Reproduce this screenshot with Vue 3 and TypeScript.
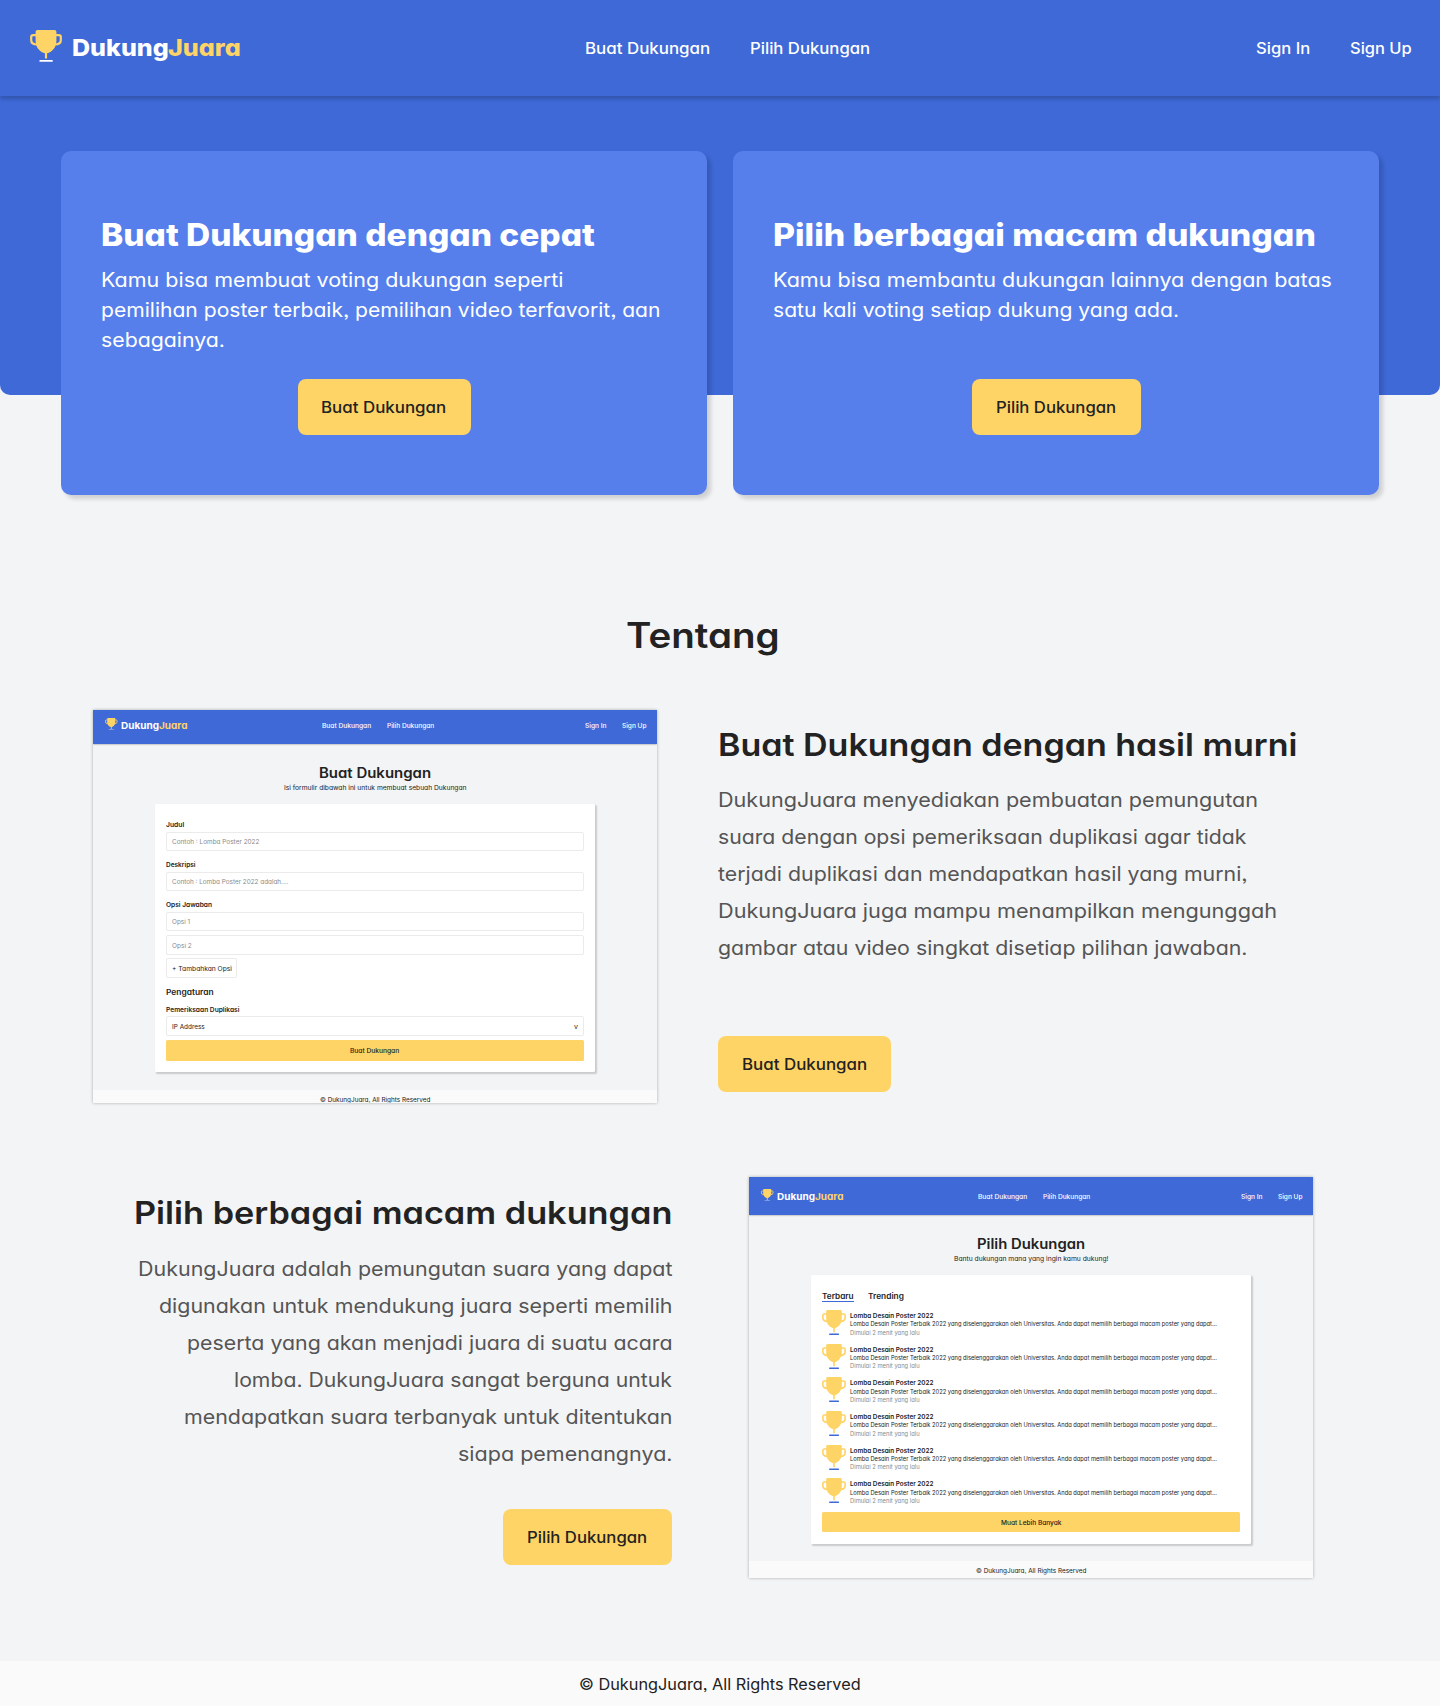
<script setup lang="ts">
import { defineComponent, h, type Directive } from 'vue'

// Stretches a single line horizontally so that its glyphs span the given width.
const fitText = (el: HTMLElement, width: number) => {
  const natural = el.getBoundingClientRect().width
  const bearings = parseFloat(getComputedStyle(el).fontSize) * 0.07
  const k = width / (natural - bearings)
  el.style.transform = `scaleX(${k})`
  el.style.marginRight = `${natural * k - natural}px`
}
const vFit: Directive<HTMLElement, number> = {
  mounted: (el, binding) => fitText(el, binding.value),
}

const Trophy = defineComponent({
  props: { base: { type: String, default: '#ffffff' } },
  setup: (props) => () =>
    h('svg', { viewBox: '0 0 32 32', fill: 'none', preserveAspectRatio: 'none' }, [
      h('path', {
        d: 'M7 5.1H3.2Q1.2 5.1 1.2 7.1V10.2Q1.2 14.3 7.2 14.5M25 5.1H28.8Q30.8 5.1 30.8 7.1V10.2Q30.8 14.3 24.8 14.5',
        stroke: '#ffd466',
        'stroke-width': 2.2,
      }),
      h('path', {
        d: 'M7.4 0H24.6Q26.4 0 26.4 1.8V11C26.4 18 21.5 22.2 17.1 23.3V28.4H14.9V23.3C10.5 22.2 5.6 18 5.6 11V1.8Q5.6 0 7.4 0Z',
        fill: '#ffd466',
      }),
      h('path', { d: 'M10.3 30.9H21.9', stroke: props.base, 'stroke-width': 1.9, 'stroke-linecap': 'round' }),
    ]),
})

type Line = { text: string; w: number }

const cards: { title: Line; lines: Line[]; button: Line; bw: number }[] = [
  {
    title: { text: 'Buat Dukungan dengan cepat', w: 491.5 },
    lines: [
      { text: 'Kamu bisa membuat voting dukungan seperti', w: 461 },
      { text: 'pemilihan poster terbaik, pemilihan video terfavorit, aan', w: 558 },
      { text: 'sebagainya.', w: 122.5 },
    ],
    button: { text: 'Buat Dukungan', w: 124 },
    bw: 173,
  },
  {
    title: { text: 'Pilih berbagai macam dukungan', w: 540.5 },
    lines: [
      { text: 'Kamu bisa membantu dukungan lainnya dengan batas', w: 557.5 },
      { text: 'satu kali voting setiap dukung yang ada.', w: 404.5 },
    ],
    button: { text: 'Pilih Dukungan', w: 119 },
    bw: 169,
  },
]

const buatLines: Line[] = [
  { text: 'DukungJuara menyediakan pembuatan pemungutan', w: 538.5 },
  { text: 'suara dengan opsi pemeriksaan duplikasi agar tidak', w: 527 },
  { text: 'terjadi duplikasi dan mendapatkan hasil yang murni,', w: 528 },
  { text: 'DukungJuara juga mampu menampilkan mengunggah', w: 557.5 },
  { text: 'gambar atau video singkat disetiap pilihan jawaban.', w: 528 },
]
const pilihLines: Line[] = [
  { text: 'DukungJuara adalah pemungutan suara yang dapat', w: 533 },
  { text: 'digunakan untuk mendukung juara seperti memilih', w: 512 },
  { text: 'peserta yang akan menjadi juara di suatu acara', w: 484 },
  { text: 'lomba. DukungJuara sangat berguna untuk', w: 436.5 },
  { text: 'mendapatkan suara terbanyak untuk ditentukan', w: 487 },
  { text: 'siapa pemenangnya.', w: 213 },
]
</script>

<template>
  <div class="page">
    <header class="header">
      <div class="logo">
        <Trophy class="trophy" />
        <div class="brand"><span v-fit="95" class="fit">Dukung</span><span v-fit="71" class="fit gold">Juara</span></div>
      </div>
      <nav class="nav">
        <a><span v-fit="124" class="fit">Buat Dukungan</span></a>
        <a><span v-fit="119" class="fit">Pilih Dukungan</span></a>
      </nav>
      <nav class="nav">
        <a><span v-fit="53" class="fit">Sign In</span></a>
        <a><span v-fit="60.5" class="fit">Sign Up</span></a>
      </nav>
    </header>

    <section class="hero">
      <article v-for="c in cards" :key="c.title.text" class="card">
        <h2><span v-fit="c.title.w" class="fit">{{ c.title.text }}</span></h2>
        <div class="copy">
          <p v-for="l in c.lines" :key="l.text"><span v-fit="l.w" class="fit">{{ l.text }}</span></p>
        </div>
        <button class="btn" :style="{ width: c.bw + 'px' }"><span v-fit="c.button.w" class="fit">{{ c.button.text }}</span></button>
      </article>
    </section>

    <main class="about">
      <h1><span v-fit="151" class="fit">Tentang</span></h1>

      <div class="row first">
        <div class="mock">
          <div class="m-header short">
            <div class="logo">
              <Trophy class="trophy" />
              <div class="brand"><span v-fit="37.3" class="fit">Dukung</span><span v-fit="27.8" class="fit gold">Juara</span></div>
            </div>
            <div class="nav">
              <a><span v-fit="48.7" class="fit">Buat Dukungan</span></a>
              <a><span v-fit="46.8" class="fit">Pilih Dukungan</span></a>
            </div>
            <div class="nav">
              <a><span v-fit="21" class="fit">Sign In</span></a>
              <a><span v-fit="24" class="fit">Sign Up</span></a>
            </div>
          </div>
          <h3><span v-fit="111" class="fit">Buat Dukungan</span></h3>
          <div class="m-sub"><span v-fit="182" class="fit">Isi formulir dibawah ini untuk membuat sebuah Dukungan</span></div>
          <div class="m-card form">
            <div class="label top"><span v-fit="17.7" class="fit">Judul</span></div>
            <div class="input"><span v-fit="87" class="fit">Contoh : Lomba Poster 2022</span></div>
            <div class="label"><span v-fit="29" class="fit">Deskripsi</span></div>
            <div class="input"><span v-fit="116" class="fit">Contoh : Lomba Poster 2022 adalah....</span></div>
            <div class="label"><span v-fit="45.5" class="fit">Opsi Jawaban</span></div>
            <div class="input"><span v-fit="17.7" class="fit">Opsi 1</span></div>
            <div class="input next"><span v-fit="19.3" class="fit">Opsi 2</span></div>
            <div class="input next add"><span v-fit="59.5" class="fit">+ Tambahkan Opsi</span></div>
            <div class="m-group"><span v-fit="47" class="fit">Pengaturan</span></div>
            <div class="label dup"><span v-fit="73" class="fit">Pemeriksaan Duplikasi</span></div>
            <div class="input select"><span v-fit="32.3" class="fit">IP Address</span><span v-fit="3.5" class="fit">v</span></div>
            <div class="m-btn"><span v-fit="48.7" class="fit">Buat Dukungan</span></div>
          </div>
          <div class="m-footer low"><span v-fit="110" class="fit">© DukungJuara, All Rights Reserved</span></div>
        </div>
        <div class="info">
          <h2><span v-fit="577" class="fit">Buat Dukungan dengan hasil murni</span></h2>
          <div class="desc">
            <p v-for="l in buatLines" :key="l.text"><span v-fit="l.w" class="fit">{{ l.text }}</span></p>
          </div>
          <button class="btn wide"><span v-fit="124" class="fit">Buat Dukungan</span></button>
        </div>
      </div>

      <div class="row second">
        <div class="info right">
          <h2><span v-fit="536" class="fit">Pilih berbagai macam dukungan</span></h2>
          <div class="desc">
            <p v-for="l in pilihLines" :key="l.text"><span v-fit="l.w" class="fit">{{ l.text }}</span></p>
          </div>
          <button class="btn"><span v-fit="119" class="fit">Pilih Dukungan</span></button>
        </div>
        <div class="mock tall">
          <div class="m-header">
            <div class="logo">
              <Trophy class="trophy" />
              <div class="brand"><span v-fit="37.3" class="fit">Dukung</span><span v-fit="27.8" class="fit gold">Juara</span></div>
            </div>
            <div class="nav">
              <a><span v-fit="48.7" class="fit">Buat Dukungan</span></a>
              <a><span v-fit="46.8" class="fit">Pilih Dukungan</span></a>
            </div>
            <div class="nav">
              <a><span v-fit="21" class="fit">Sign In</span></a>
              <a><span v-fit="24" class="fit">Sign Up</span></a>
            </div>
          </div>
          <h3><span v-fit="107" class="fit">Pilih Dukungan</span></h3>
          <div class="m-sub"><span v-fit="154" class="fit">Bantu dukungan mana yang ingin kamu dukung!</span></div>
          <div class="m-card list">
            <div class="tabs">
              <div class="tab on"><span v-fit="31" class="fit">Terbaru</span></div>
              <div class="tab"><span v-fit="35.3" class="fit">Trending</span></div>
            </div>
            <div v-for="n in 6" :key="n" class="item">
              <Trophy class="item-trophy" base="#3e69d7" />
              <div class="item-text">
                <div class="item-title"><span v-fit="83" class="fit">Lomba Desain Poster 2022</span></div>
                <div><span v-fit="366.5" class="fit">Lomba Desain Poster Terbaik 2022 yang diselenggarakan oleh Universitas. Anda dapat memilih berbagai macam poster yang dapat...</span></div>
                <div class="muted"><span v-fit="69.3" class="fit">Dimulai 2 menit yang lalu</span></div>
              </div>
            </div>
            <div class="m-btn"><span v-fit="60" class="fit">Muat Lebih Banyak</span></div>
          </div>
          <div class="m-footer"><span v-fit="110" class="fit">© DukungJuara, All Rights Reserved</span></div>
        </div>
      </div>
    </main>

    <footer class="footer"><span v-fit="280.5" class="fit">© DukungJuara, All Rights Reserved</span></footer>
  </div>
</template>

<style>
body { margin: 0; background: #f3f4f6; }
</style>

<style scoped>
.page {
  width: 1440px;
  height: 1706px;
  display: flex;
  flex-direction: column;
  overflow: hidden;
  background: #f3f4f6;
  color: #222;
  font-family: Inter, "Open Sans", sans-serif;
  font-feature-settings: "cv11", "ss03";
}
h1, h2, h3, p { margin: 0; font-weight: inherit; }
.fit { display: inline-block; white-space: nowrap; transform-origin: left center; vertical-align: top; }
.mock .fit { translate: 0 .5px; }
.gold { color: #ffd466; }

.header {
  position: relative;
  z-index: 1;
  flex: none;
  box-sizing: border-box;
  height: 96px;
  padding: 0 28px 0 30px;
  display: grid;
  grid-template-columns: 555px 1fr auto;
  align-items: center;
  background: #3e69d7;
  color: #fff;
  box-shadow: 0 3px 4px rgba(0, 0, 0, .2);
}
.logo { display: flex; align-items: center; }
.trophy { width: 32px; height: 32px; margin-top: -4px; }
.brand { margin-left: 10px; font-size: 23.5px; font-weight: 800; line-height: 36px; white-space: nowrap; display: flex; }
.brand .gold { margin-left: -.3px; }
.nav { display: flex; gap: 40px; font-size: 15.6px; font-weight: 500; line-height: 24px; }
.header .nav { padding-top: 2px; }

.hero {
  flex: none;
  box-sizing: border-box;
  height: 299px;
  padding: 55px 61px 0;
  display: flex;
  align-items: flex-start;
  gap: 26px;
  background: #3e69d7;
  border-radius: 0 0 10px 10px;
}
.card {
  box-sizing: border-box;
  width: 646px;
  height: 344px;
  padding: 59.5px 40px 0;
  display: flex;
  flex-direction: column;
  background: #567fec;
  color: #fff;
  border-radius: 10px;
  box-shadow: 4px 4px 4px rgba(0, 0, 0, .15);
}
.card h2 { font-size: 31.2px; font-weight: 800; line-height: 48px; }
.copy { margin-top: 6.2px; height: 90px; font-size: 19.6px; line-height: 30px; }
.btn {
  box-sizing: border-box;
  width: 169px;
  height: 56px;
  padding: 2px 0 0;
  border: 0;
  border-radius: 8px;
  background: #ffd466;
  color: #222;
  font: inherit;
  font-feature-settings: inherit;
  font-size: 15.6px;
  font-weight: 500;
  line-height: 24px;
}
.card .btn { align-self: center; margin-top: 24.3px; }
.btn.wide { width: 173px; }

.about { flex: none; box-sizing: border-box; height: 1266px; padding: 213px 127px 0 93px; }
h1 { font-size: 35px; font-weight: 600; line-height: 54px; text-align: center; }
.row { display: flex; align-items: flex-start; }
.first { margin-top: 48px; gap: 61px; }
.second { margin-top: 74px; gap: 77px; }
.info { flex: 1; padding-top: 11px; }
.info h2 { font-size: 31.2px; font-weight: 600; line-height: 48px; }
.desc { margin: 13.2px 0 68.8px; font-size: 19.6px; line-height: 37px; color: #555; }
.right { flex: none; width: 579px; padding-top: 12.4px; text-align: right; }
.right .desc { margin: 13.8px 0 36.3px; }
.right .btn { text-align: center; }

.mock {
  flex: none;
  width: 564px;
  height: 393px;
  display: flex;
  flex-direction: column;
  overflow: hidden;
  background: #f3f4f6;
  box-shadow: 0 0 3px rgba(0, 0, 0, .3);
  font-size: 6.2px;
  line-height: 10px;
}
.tall { height: 401px; }
.m-header {
  flex: none;
  box-sizing: border-box;
  height: 37.5px;
  padding: 0 11px 0 12px;
  display: grid;
  grid-template-columns: 217px 1fr auto;
  align-items: center;
  background: #3e69d7;
  color: #fff;
  box-shadow: 0 .8px 1.6px rgba(0, 0, 0, .35);
}
.m-header.short { height: 33.5px; padding-bottom: 4px; }
.mock .trophy { width: 12.5px; height: 12.5px; margin-top: -1.2px; }
.mock .brand { margin-left: 3.6px; font-size: 9.2px; font-weight: 700; line-height: 14px; }
.mock .brand .gold { margin-left: 0; }
.mock .nav { gap: 15.4px; font-size: 6.2px; line-height: 10px; }
.mock h3 { margin-top: 18.4px; font-size: 13.8px; font-weight: 600; line-height: 20px; text-align: center; }
.m-sub { margin-top: .4px; text-align: center; }
.m-card {
  flex: none;
  box-sizing: border-box;
  width: 440px;
  margin: 11.3px 0 0 62px;
  padding: 15.2px 11.5px 0 11.4px;
  background: #fff;
  border-radius: 1.5px;
  box-shadow: 1.6px 1.6px 1.6px rgba(0, 0, 0, .17);
}
.form { height: 268.5px; }
.list { height: 269.5px; padding-top: 16.5px; }
.label { margin: 7.6px 0 2.8px; font-weight: 600; }
.label.top { margin-top: 0; }
.label.dup { margin: 6.1px 0 2.2px; }
.input {
  box-sizing: border-box;
  height: 19.6px;
  padding: 0 4.5px;
  display: flex;
  align-items: center;
  border: 1px solid #ebebeb;
  border-radius: 2px;
  color: #8a8a8a;
}
.input.next { margin-top: 3.8px; }
.input.add { width: 71px; color: #222; }
.input.select { justify-content: space-between; color: #222; }
.m-group { margin-top: 8.2px; font-size: 7.7px; font-weight: 600; line-height: 12px; }
.m-btn {
  height: 20.4px;
  border-radius: 1.5px;
  background: #ffd466;
  font-weight: 500;
  line-height: 20.4px;
  text-align: center;
}
.form .m-btn { margin-top: 4.2px; }
.m-footer { flex: none; height: 17px; margin-top: auto; background: #fafafa; line-height: 17px; text-align: center; }
.m-footer.low { height: 13px; }
.tabs { display: flex; gap: 14.4px; height: 18.8px; font-size: 7.7px; font-weight: 600; line-height: 10px; }
.tab { height: 10px; }
.tab.on { border-bottom: 1.4px solid #3e69d7; }
.item { height: 33.7px; display: flex; gap: 3.9px; font-size: 5.5px; line-height: 8.4px; }
.item-trophy { flex: none; width: 24px; height: 25px; }
.item-text { padding-top: 1px; }
.item-title { font-size: 6.2px; font-weight: 600; }
.muted { color: #8a8a8a; }

.footer { flex: none; height: 45px; background: #fafafa; font-size: 15.6px; line-height: 47px; text-align: center; }
</style>
